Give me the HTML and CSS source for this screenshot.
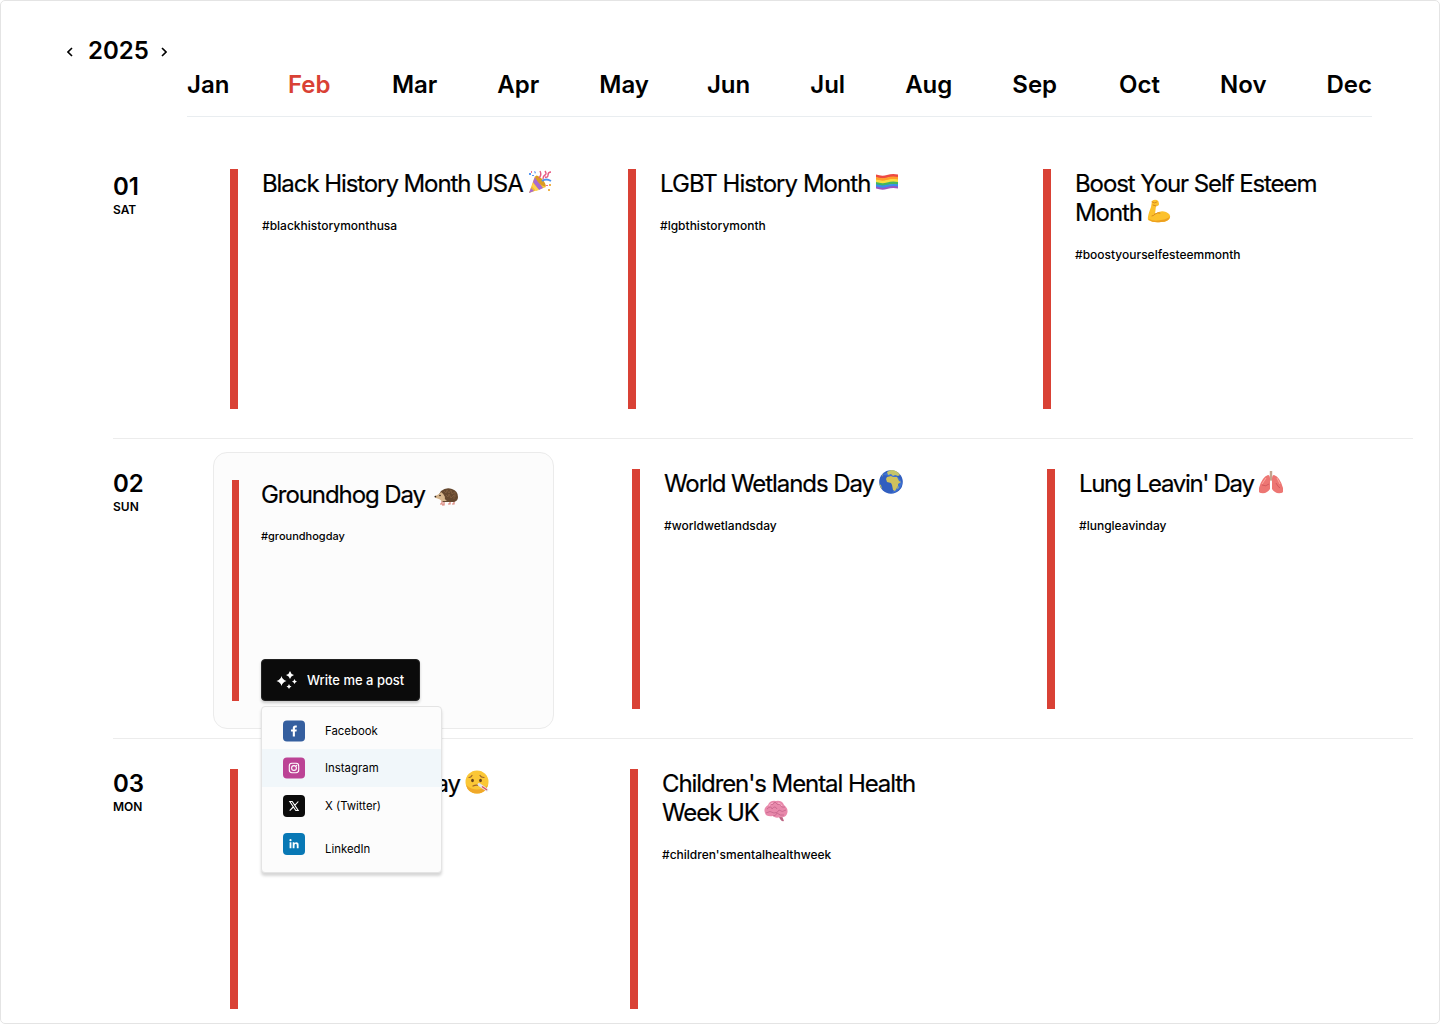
FILE: index.html
```html
<!DOCTYPE html>
<html lang="en">

<head>
    <meta charset="utf-8" />
    <title>Content Calendar 2025</title>
    <link rel="stylesheet" href="styles.css">
</head>

<body>
    <div class="calendar">
        <div class="year">
            <svg class="arrow" viewBox="0 0 6 10"><path d="M5 1 1 5l4 4" /></svg>
            <span>2025</span>
            <svg class="arrow next" viewBox="0 0 6 10"><path d="m1 1 4 4-4 4" /></svg>
        </div>

        <div class="months">
            <span>Jan</span>
            <span class="active">Feb</span>
            <span>Mar</span>
            <span>Apr</span>
            <span>May</span>
            <span class="summer">Jun</span>
            <span class="summer">Jul</span>
            <span class="summer">Aug</span>
            <span class="summer">Sep</span>
            <span>Oct</span>
            <span>Nov</span>
            <span>Dec</span>
        </div>

        <div class="day">
            <div class="date">
                <p class="number">01</p>
                <p class="weekday">SAT</p>
            </div>
            <div class="events first">
                <div class="event">
                    <h2>Black History Month USA<svg class="emoji" viewBox="0 0 24 24">
                            <path d="M1 23 7 6q8 3 11 11z" fill="#f5bd32" />
                            <path d="m1 23 2-5 3 3zM5 12l2-5 8 11-4 2z" fill="#a76bd0" />
                            <path d="m5 13 6 7-3 1-4-5zM8 7q7 2 10 9l-3 1z" fill="#ffd34f" />
                            <ellipse cx="12.5" cy="11" rx="2.5" ry="7" transform="rotate(-43 12.5 11)" fill="#d99b24" />
                            <path d="M14 11q4-3 9 0" fill="none" stroke="#4d91ef" stroke-width="1.8" />
                            <path d="M11 8q3-3 1-7M15 9q0-3 2-4t0-4M17 7q3 1 3-2t3-3" fill="none" stroke="#e75a83" stroke-width="1.4" />
                            <path d="M1 3h2v2H1zM6 1l2 1-1 2zM4 5h2v1H4z" fill="#5598f3" />
                            <path d="M3 1h1v2H3zM18 15h2v1h-2z" fill="#ed6d93" />
                            <path d="M20 19h2v2h-2zM21 14h2v2h-2z" fill="#efb34b" />
                        </svg></h2>
                    <p class="tag">#blackhistorymonthusa</p>
                </div>
                <div class="event">
                    <h2 class="lgbt">LGBT History Month<svg class="emoji" viewBox="0 0 24 24">
                            <path d="M1 4.500q6 2 11 .5t11-.5v3q-6-1-11 .5T1 7.500z" fill="#ed4a43" />
                            <path d="M1 7q6 2 11 .5T23 7v3q-6-1-11 .5T1 10z" fill="#ff9f29" />
                            <path d="M1 9.500q6 2 11 .5t11-.5v3q-6-1-11 .5t-11-.5z" fill="#f8df3f" />
                            <path d="M1 12q6 2 11 .5T23 12v3q-6-1-11 .5T1 15z" fill="#43b75d" />
                            <path d="M1 14.300q6 2 11 .5t11-.5v3q-6-1-11 .5t-11-.5z" fill="#398ded" />
                            <path d="M1 16.500q6 2 11 .5t11-.5v2q-6-1-11 .5t-11-.5z" fill="#9b55be" />
                        </svg></h2>
                    <p class="tag">#lgbthistorymonth</p>
                </div>
                <div class="event">
                    <h2>Boost Your Self Esteem Month<svg class="emoji" viewBox="0 0 24 24">
                            <path d="M5 2q2-2 5-1 2 1 2 4 0 2-3 2l-1 8q5-4 11-2 5 2 4 6-2 4-9 4-8 1-13-2Q0 18 4 8z" fill="#fcc12c" />
                            <path d="M2 20q5 3 12 1 7-1 9-4-1 6-9 6-8 1-12-2z" fill="#eda020" />
                            <path d="M5 3q3 2 5 0M9 7 6 6M8 15q-1 2-3 2M8 15q3-2 5-1" fill="none" stroke="#d88b1d" stroke-width="1" stroke-linecap="round" />
                        </svg></h2>
                    <p class="tag">#boostyourselfesteemmonth</p>
                </div>
            </div>
        </div>

        <div class="day">
            <div class="date">
                <p class="number">02</p>
                <p class="weekday">SUN</p>
            </div>
            <div class="events second">
                <div class="card">
                    <div class="event small">
                        <h2>Groundhog Day<svg class="emoji" viewBox="0 0 24 24">
                                <path d="M8 18v3H6m4-2v3H8m8-3v2h-2m6-3v3h-2" fill="none" stroke="#d77c72" stroke-width="1.2" />
                                <path d="M7 8q5-4 11-2 6 2 6 8 0 4-4 5H9l-5-6z" fill="#65482f" />
                                <path d="M7 9q-1 2-6 4-1 1 1 2 4 1 6 3h5q-3-2-2-4-1-3-4-5z" fill="#d7b68d" />
                                <path d="m10 8 2 2 1-3 2 3 2-3 1 4 3-2v5M12 12l2 2 1-3 2 4 3-3v4" fill="none" stroke="#866344" stroke-width=".7" />
                                <circle cx="1.400" cy="13.600" r=".9" fill="#2d211a" />
                                <circle cx="6" cy="12.500" r=".8" fill="#2d211a" />
                            </svg></h2>
                        <p class="tag">#groundhogday</p>
                    </div>

                    <button class="write-btn">
                        <svg class="sparkles" viewBox="0 0 22 18">
                            <path d="M5.500 5q.8 3.700 5 5-4.200 1.300-5 5-.8-3.700-5-5 4.200-1.300 5-5zM14 0q.8 3.200 4 4-3.200.8-4 4-.8-3.200-4-4 3.200-.8 4-4zM18.500 8q.5 2 2.500 2.500-2 .5-2.500 2.500-.5-2-2.500-2.500 2-.5 2.500-2.500zM13 13q.5 2 2.500 2.500-2 .5-2.500 2.500-.5-2-2.500-2.500 2-.5 2.500-2.500z" />
                        </svg>
                        <span>Write me a post</span>
                    </button>

                    <div class="menu">
                        <div class="menu-item facebook">
                            <svg class="social" viewBox="0 0 22 22">
                                <rect width="22" height="21" y=".5" rx="4" fill="#355f9f" />
                                <path d="M9.800 16.500v-5H8V9.500h1.800V8q0-2.600 2.500-2.600h1.500v2h-1q-.9 0-.9 1v1.100h1.900l-.3 2h-1.600v5z" fill="#fff" />
                            </svg>
                            <span>Facebook</span>
                        </div>
                        <div class="menu-item selected">
                            <svg class="social" viewBox="0 0 22 22">
                                <rect width="22" height="21" y=".5" rx="4" fill="#bc4395" />
                                <g fill="none" stroke="#fff" stroke-width="1.100">
                                    <rect x="6.300" y="6.300" width="9.400" height="9.400" rx="2.600" />
                                    <circle cx="11" cy="11" r="2.400" />
                                </g>
                                <circle cx="13.600" cy="8.400" r=".65" fill="#fff" />
                            </svg>
                            <span>Instagram</span>
                        </div>
                        <div class="menu-item">
                            <svg class="social" viewBox="0 0 22 22">
                                <rect width="22" height="22" rx="4" fill="#0b0b0b" />
                                <path d="M6.800 6.500h2.400l6 9h-2.400zM15.300 6.500l-3.800 4.100M10.200 12l-3.500 3.700" fill="none" stroke="#fff" stroke-width="1.100" />
                            </svg>
                            <span>X (Twitter)</span>
                        </div>
                        <div class="menu-item linkedin">
                            <svg class="social" viewBox="0 0 22 22">
                                <rect width="22" height="22" rx="4" fill="#0878b5" />
                                <circle cx="7.500" cy="7.200" r="1.100" fill="#fff" />
                                <path d="M6.600 9.300h1.800v5.900H6.600zM9.700 9.300h1.700v.8q2.200-1.700 3.700 0 .5.600.5 2v3.100h-1.800v-2.800q0-1.600-1-1.600-1.300 0-1.300 1.600v2.800H9.700z" fill="#fff" />
                            </svg>
                            <span>LinkedIn</span>
                        </div>
                    </div>
                </div>
                <div class="event">
                    <h2>World Wetlands Day<svg class="emoji" viewBox="0 0 24 24">
                            <circle cx="12" cy="12" r="11.800" fill="#315fc0" />
                            <path d="M3 5q6-5 13 0 6 3 7 9-3 8-10 9 5-6 3-12T3 5z" fill="#447bdc" opacity=".7" />
                            <path d="m8 7 4-1 2 1 4 0 2 4 2 1-3 2v2l-3 5-2-1-1-5-1-2-4-1-1-3z" fill="#d0c25d" />
                            <path d="M9 5 8 2l4-2q6 0 9 5l-2 1-3-1-2 1-2-2zM0 14l2 1 1 4-1-1zM3 5l1-1-1 3zM20 16l-1 3-1-1z" fill="#c6c568" />
                        </svg></h2>
                    <p class="tag">#worldwetlandsday</p>
                </div>
                <div class="event">
                    <h2 class="lung">Lung Leavin' Day<svg class="emoji" viewBox="0 0 24 24">
                            <path d="M12 1v8m0-1-3 4m3-4 3 4" fill="none" stroke="#c4a48e" stroke-width="2.400" />
                            <path d="M9 5q2 0 2 4v10q-3 5-9 4-3 0-2-5Q3 7 9 5z" fill="#ed7673" />
                            <path d="M15 5q-2 0-2 4v10q3 5 9 4 3 0 2-5Q21 7 15 5z" fill="#ed7673" />
                            <path d="M3 15q4 2 7-1M21 18q-2-1-4-5" fill="none" stroke="#c94f55" stroke-width=".7" />
                            <path d="m7 8-4 6m15-6 3 6" fill="none" stroke="#ffaaa1" stroke-width="1" />
                        </svg></h2>
                    <p class="tag">#lungleavinday</p>
                </div>
            </div>
        </div>

        <div class="day">
            <div class="date">
                <p class="number">03</p>
                <p class="weekday">MON</p>
            </div>
            <div class="events third">
                <div class="event">
                    <h2>National Sickie Day<svg class="emoji" viewBox="0 0 24 24">
                            <circle cx="12" cy="12" r="11.500" fill="#fbc736" />
                            <path d="M1 15q11 9 22 0-2 8.500-11 8.500T1 15z" fill="#f0a829" />
                            <ellipse cx="7.500" cy="10.500" rx="1.400" ry="1.800" fill="#69431e" />
                            <ellipse cx="15.500" cy="10.500" rx="1.400" ry="1.800" fill="#69431e" />
                            <path d="M4 7.500q2 0 3-2m8 0q1 2 4 2M8 16q3-1.500 6-.5" fill="none" stroke="#9c642c" stroke-width="1.200" stroke-linecap="round" />
                            <path d="m14 14.500 8 5.500" stroke="#e3e5ef" stroke-width="2.800" stroke-linecap="round" />
                            <path d="m17 16.500 5 3.500" stroke="#e14d57" stroke-width="1.400" />
                        </svg></h2>
                </div>
                <div class="event">
                    <h2>Children's Mental Health Week UK<svg class="emoji" viewBox="0 0 24 24">
                            <path d="M14 17h4l2 5q-3 1-5-4z" fill="#bd6684" />
                            <path d="M1 14Q-1 9 4 6q2-5 8-4 6-1 8 4 5 4 3 9-2 4-7 3-4 2-7-1-7 1-8-3z" fill="#e889ab" />
                            <path d="M3 10q4-4 5 0 3-4 5 0M6 5q3 2 5-2 2 4 6 2-1 4 4 3M2 14q4-3 8 0 4 0 5-3 3 3 7 0M9 17q3 0 4-3 3 3 7 2" fill="none" stroke="#c4658a" stroke-width=".8" />
                            <path d="M5 7q1-3 4-3M14 4q3 0 4 3" fill="none" stroke="#ffb9d0" stroke-width=".9" />
                        </svg></h2>
                    <p class="tag">#children'smentalhealthweek</p>
                </div>
            </div>
        </div>
    </div>
</body>

</html>
```
FILE: styles.css
```css
* {
    box-sizing: border-box;
}

body {
    margin: 0;
    background-color: white;
    font-family: Inter, sans-serif;
    color: #000;
}

h2,
p {
    margin: 0;
}

.calendar {
    height: 1024px;
    overflow: hidden;
    border: 1px solid #e4e4e4;
    border-radius: 5px;
}

.year {
    display: flex;
    align-items: center;
    gap: 15px;
    height: 30px;
    margin: 34px 0 0 66px;
    font-size: 24px;
    font-weight: 600;
}

.arrow {
    width: 6px;
    height: 10px;
    margin-top: 4px;
    fill: none;
    stroke: #000;
    stroke-width: 1.6;
}

.arrow.next {
    margin-left: -3px;
}

.months {
    display: flex;
    justify-content: space-between;
    width: 1185px;
    height: 52px;
    margin-left: 186px;
    padding-top: 5px;
    border-bottom: 1px solid #e9edf0;
    font-size: 24px;
    font-weight: 600;
    line-height: 30px;
}

.months .active {
    margin: 0 1.5px 0 -1.5px;
    color: #d94135;
}

.months .summer {
    margin: 0 2px 0 -2px;
}

.day {
    display: flex;
    width: 1300px;
    height: 300px;
    margin-left: 112px;
    padding-top: 30px;
    border-bottom: 1px solid #ececec;
}

.months + .day {
    height: 322px;
    padding-top: 52px;
}

.date {
    width: 117px;
    flex-shrink: 0;
}

.number {
    font-size: 24px;
    font-weight: 600;
    line-height: 29px;
}

.months + .day .date {
    padding-top: 3px;
}

.weekday {
    margin-top: 1px;
    font-size: 12px;
    font-weight: 600;
    line-height: 15px;
}

.events {
    display: grid;
    grid-template-columns: 398px 415px 1fr;
    flex: 1;
}

.events.second {
    grid-template-columns: 402px 415px 1fr;
}

.events.third {
    grid-template-columns: 400px 415px 1fr;
}

.event {
    width: 340px;
    height: 240px;
    padding-left: 24px;
    border-left: 8px solid #d94135;
}

.event h2 {
    width: 300px;
    font-size: 24px;
    font-weight: 400;
    line-height: 29px;
    letter-spacing: -1.08px;
    -webkit-text-stroke: 0.2px #000;
}

.event .lgbt {
    letter-spacing: -0.96px;
}

.event .lung {
    letter-spacing: -1.32px;
}

.emoji {
    width: 24px;
    height: 24px;
    margin-left: 5px;
    vertical-align: -2px;
}

.tag {
    margin-top: 20px;
    font-size: 12px;
    font-weight: 500;
    line-height: 15px;
}

.card {
    position: relative;
    width: 341px;
    height: 277px;
    margin: -17px 0 0 -17px;
    padding: 27px 18px;
    background-color: #fcfcfc;
    border: 1px solid #ebebeb;
    border-radius: 14px;
}

.event.small {
    width: 300px;
    height: 221px;
    padding-left: 22px;
    border-left-width: 7px;
}

.small h2 {
    width: 270px;
}

.small .emoji {
    margin-left: 9px;
    vertical-align: -4px;
}

.small .tag {
    font-size: 11px;
}

.write-btn {
    position: absolute;
    left: 47px;
    top: 206px;
    display: flex;
    align-items: center;
    gap: 9px;
    width: 159px;
    height: 42px;
    padding: 0 14px;
    background-color: #0b0b0b;
    border: 1px solid #222;
    border-radius: 4px;
    box-shadow: 0 2px 3px rgba(0, 0, 0, 0.2);
    color: white;
    font-family: Inter, sans-serif;
    font-size: 13px;
    font-weight: 500;
    white-space: nowrap;
}

.sparkles {
    width: 22px;
    height: 18px;
    fill: white;
    flex-shrink: 0;
}

.menu {
    position: absolute;
    left: 47px;
    top: 253px;
    z-index: 10;
    width: 181px;
    height: 167px;
    padding-top: 5px;
    background-color: #fcfcfc;
    border: 1px solid #e4e4e4;
    border-radius: 4px;
    box-shadow: 0 3px 3px rgba(0, 0, 0, 0.16);
}

.menu-item {
    display: flex;
    align-items: center;
    gap: 20px;
    height: 38px;
    padding-left: 21px;
    font-size: 11.4px;
}

.menu-item.facebook {
    height: 37px;
}

.menu-item.selected {
    background-color: #f1f7fa;
}

.social {
    width: 22px;
    height: 22px;
}

.linkedin span {
    padding-top: 9px;
}
```
